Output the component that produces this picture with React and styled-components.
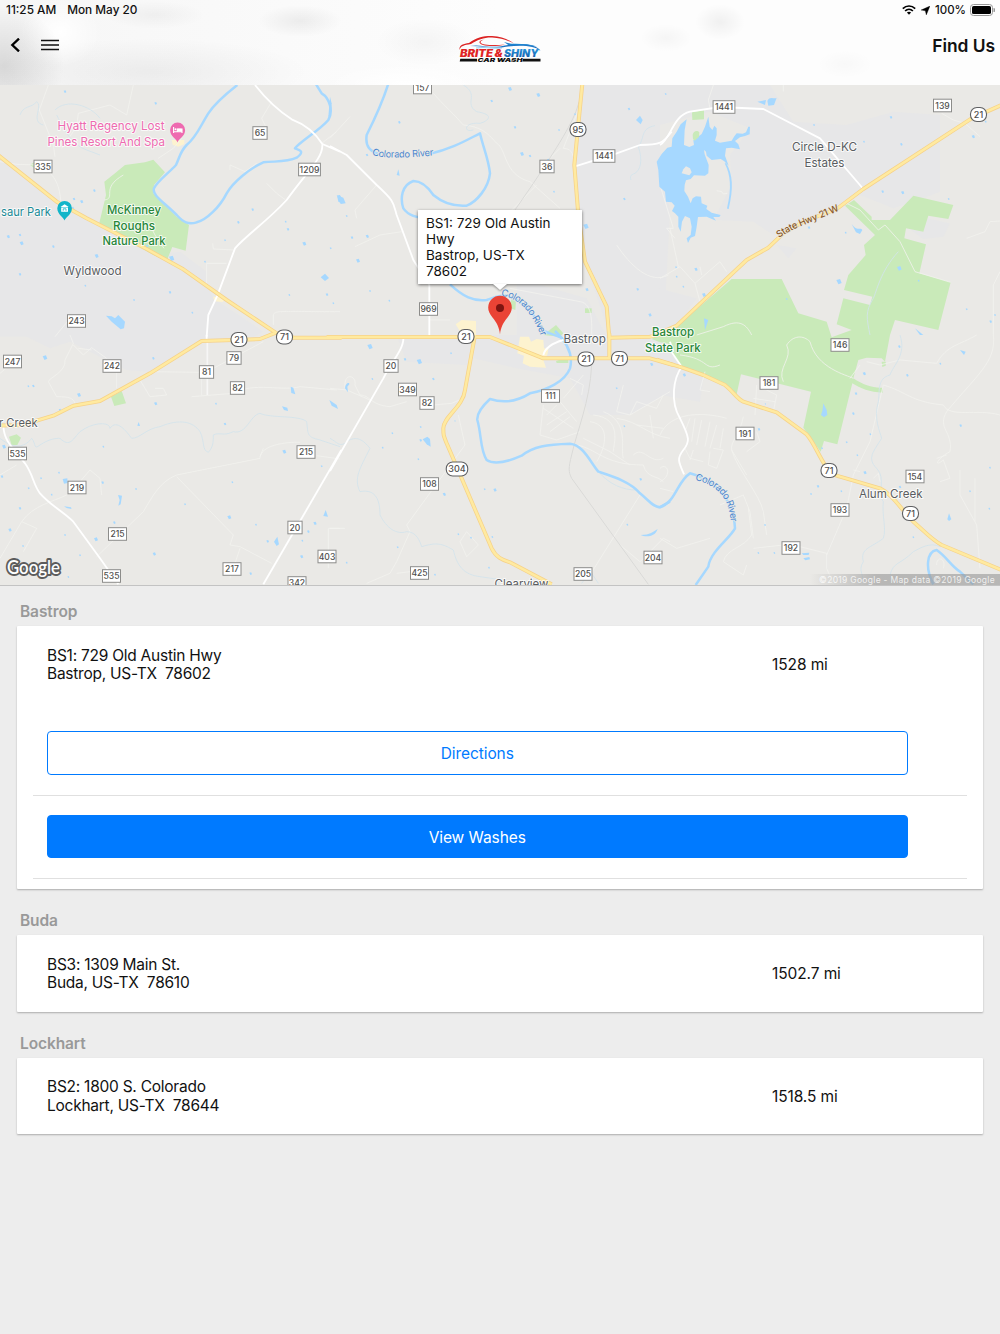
import React from 'react'
import styled, { createGlobalStyle, css } from 'styled-components'

const GlobalStyle = createGlobalStyle`
  * {
    box-sizing: border-box;
  }
  body {
    margin: 0;
    background-color: #ededed;
    font-family: Inter, 'Liberation Sans', sans-serif;
    color: #111;
  }
`

const Page = styled.div`
  width: 1000px;
  min-height: 1334px;
  background-color: #ededed;
`

/* ---------- header ---------- */

const Header = styled.header`
  height: 85px;
  padding: 0 5px 0 6px;
  background:
    radial-gradient(ellipse 60px 60px at 4px 66px, rgba(0,0,0,.12), transparent),
    radial-gradient(ellipse 40px 34px at 60px 32px, #fff, transparent),
    radial-gradient(ellipse 42px 16px at 300px 21px, rgba(0,0,0,.06), transparent),
    radial-gradient(ellipse 50px 14px at 155px 15px, rgba(0,0,0,.04), transparent),
    radial-gradient(ellipse 50px 24px at 425px 42px, rgba(0,0,0,.03), transparent),
    radial-gradient(ellipse 80px 20px at 405px 84px, #fff, transparent),
    radial-gradient(ellipse 160px 34px at 150px 72px, rgba(0,0,0,.05), transparent),
    radial-gradient(ellipse 25px 18px at 720px 22px, rgba(0,0,0,.05), transparent),
    radial-gradient(ellipse 26px 14px at 666px 38px, rgba(0,0,0,.03), transparent),
    radial-gradient(ellipse 28px 14px at 845px 64px, rgba(0,0,0,.02), transparent),
    linear-gradient(90deg, #f6f6f6, #fdfdfd 50%);
`

const StatusBar = styled.div`
  display: flex;
  justify-content: space-between;
  align-items: center;
  height: 20px;
  font-size: 11.8px;
  font-weight: 500;
`

const StatusGroup = styled.div`
  display: flex;
  align-items: center;
  gap: ${props => props.gap}px;
`

const Percent = styled.span`
  margin-right: -1px;
  font-size: 11.5px;
`

const NavBar = styled.nav`
  display: grid;
  grid-template-columns: 1fr 84px 1fr;
  align-items: center;
  height: 50px;
`

const NavLeft = styled.div`
  display: flex;
  align-items: center;
  gap: 20px;
  padding-left: 4px;
`

const NavTitle = styled.h1`
  margin: 0;
  font-size: 17.4px;
  font-weight: 600;
  letter-spacing: -0.05px;
  text-align: right;
`

const IconButton = styled.button`
  display: flex;
  padding: 0;
  border: none;
  background: none;
  cursor: pointer;
`

/* ---------- map ---------- */

const MapWrap = styled.section`
  position: relative;
  height: 501px;
  border-bottom: 1px solid #c3c3c3;
  background-color: #eae9e6;
  overflow: hidden;

  svg {
    display: block;
  }
`

const Callout = styled.div`
  position: absolute;
  top: 125px;
  left: 418px;
  width: 164px;
  height: 73.5px;
  padding: 5px 8px;
  background-color: white;
  box-shadow: 0 1px 3px rgba(0,0,0,.55);
  font-size: 13.5px;
  line-height: 16.1px;
  white-space: pre-line;

  &::after {
    content: '';
    position: absolute;
    left: 75px;
    bottom: -6px;
    border: solid transparent;
    border-width: 6px 7px 0;
    border-top-color: white;
    filter: drop-shadow(0 1px 1px rgba(0,0,0,.4));
  }
`

const Attribution = styled.div`
  position: absolute;
  right: 0;
  bottom: 0;
  width: 190px;
  height: 11px;
  padding-right: 5px;
  background: linear-gradient(90deg, rgba(150,150,150,0), rgba(150,150,150,.6) 35%);
  color: rgba(255,255,255,.8);
  font-size: 8.5px;
  line-height: 12px;
  letter-spacing: 0.3px;
  text-align: right;
  white-space: nowrap;
`

/* ---------- locations ---------- */

const Locations = styled.main`
  display: flex;
  flex-direction: column;
  padding: 0 17px;
`

const City = styled.h2`
  display: flex;
  align-items: flex-end;
  height: ${props => props.first ? 40 : 46}px;
  margin: 0;
  padding: 0 3px 4px;
  color: #999;
  font-size: 15.5px;
  font-weight: 600;
  line-height: 20px;
  letter-spacing: -0.1px;
`

const Card = styled.article`
  padding: 0 16px;
  background-color: white;
  border-radius: 1px;
  box-shadow: 0 1px 2px rgba(0,0,0,.28);
`

const Row = styled.div`
  display: grid;
  grid-template-columns: 725px 1fr;
  align-items: center;
  height: 76.5px;
  padding: 2px 0 0 14px;
  font-size: 15.5px;
  line-height: 18.5px;
  letter-spacing: -0.1px;
`

const Address = styled.div`
  white-space: pre;
  letter-spacing: -0.25px;
`

const Action = styled.div`
  padding: ${props => props.first ? '28.5px' : '19px'} 59px 20px 13.5px;
  border-bottom: 1px solid #e0e0e0;
`

const Button = styled.button`
  display: block;
  width: 100%;
  height: 43.5px;
  padding: 2px 0 0;
  border: 1px solid #007aff;
  border-radius: 4px;
  background-color: white;
  color: #007aff;
  font-family: inherit;
  font-size: 15.5px;
  letter-spacing: -0.07px;
  cursor: pointer;

  ${props => props.filled &&
    css`
      background-color: #007aff;
      color: white;
    `
  }
`

const CardEnd = styled.div`
  height: 10px;
`

/* Map artwork, split in tiles. Coordinates are in thirds of a pixel. */
const tiles = [
  {
    x: 0, y: 85,
    towns: ['M-5,220 L180,360 L300,420 L460,510 L540,500 L620,560 L620,600 L640,640 L790,740 L760,755 L-5,755Z'],
    parks: [
      'M297,418 L318,330 313,290 345,265 375,240 435,232 460,224 495,262 462,300 460,325 490,355 530,395 567,420 557,497 517,486 500,527 460,510Z',
      'M90,240 L102,232 102,248Z',
    ],
    yellow: ['M515,165 h38 v12 l-18,8 -17,-6Z', 'M640,635 l40,2 -12,14 -25,-2Z'],
    rivers: ['M712,0 C680,25 645,55 625,85 C600,125 590,155 560,180 C540,200 540,215 528,240 C505,265 470,290 462,310 C455,330 490,350 530,390 C550,412 565,420 590,412 C620,405 660,365 680,325 C700,290 750,250 790,232 C830,228 860,232 890,218 C915,200 900,195 885,190 C900,170 960,135 985,105 C1000,80 990,40 965,25 L947,-4'],
    creeks: ['M60,90 C70,60 95,70 110,50 C130,65 90,110 130,120', 'M165,75 C200,40 270,60 300,100 M170,90 C200,150 220,180 260,195 L300,210'],
    lanes: ['M145,0 L118,75 160,180 165,215 M185,190 L230,125 235,85 330,60 380,90 400,0', 'M0,230 L50,238 120,240 C170,270 180,310 182,350', 'M815,50 L785,100 800,130', 'M800,295 L830,325 857,345', 'M770,235 L735,260 690,240 690,255', 'M700,495 L640,492 638,475', 'M680,535 L620,535 620,600', 'M313,345 C350,340 300,310 370,270 370,240', 'M545,160 L520,190 475,220', 'M820,720 V690 C825,675 840,680 1020,680', 'M165,755 L210,700 M965,175 L1010,140', 'M450,420 L465,450 492,490'],
    roads: ['M765,0 C800,45 840,80 875,103 C920,120 950,150 967,177 C970,220 920,260 860,345 C800,410 740,450 705,490 L652,632 L625,690 L620,755', 'M967,177 L1020,200'],
    highways: ['M-10,207 L170,350 L260,400 L440,492 L550,553 L680,645 L830,745 L880,758'],
    ponds: [[195,20,4],[467,55,4],[25,455,5],[65,475,6],[60,450,4],[218,370,5],[245,350,5],[283,317,4],[222,342,4],[160,485,4],[290,513,6],[60,568,4],[256,602,3],[402,645,3],[510,622,4],[577,683,3],[758,374,4],[715,412,4],[857,410,3],[864,433,4],[913,476,6],[992,490,3],[981,629,4],[868,630,3],[515,520,8],[615,530,3],[441,483,4],[110,380,6],[675,466,3]],
    lakes: ['M318,692 L335,694 345,700 355,690 375,710 372,730 362,733 335,710Z', 'M962,577 L975,566 987,579 975,588Z', 'M1012,335 C1018,325 1025,330 1025,355 L1015,350Z'],
  },
  {
    x: 330, y: 85,
    towns: ['M760,0 L990,0 L990,190 L1020,380 L1000,755 L840,755 L770,540 L745,380 L733,240Z', 'M560,580 L770,640 L830,755 L560,755Z'],
    parks: ['M545,640 L558,648 556,675 538,668Z', 'M640,750 L678,720 700,745 690,755Z', 'M765,670 h20 v14 h-20Z'],
    yellow: ['M377,718 L395,705 438,708 438,755 400,755Z'],
    rivers: [
      'M175,-4 C155,60 130,110 110,150 C105,185 120,200 150,208 M295,208 C370,190 410,165 450,145 C460,190 475,220 480,265 C475,310 440,350 410,362 C370,365 340,355 310,330 C290,300 270,288 250,288 C215,300 210,340 220,370 C235,392 265,400 300,400',
      'M360,598 C400,635 430,650 470,645 C500,635 510,630 530,632 C580,645 615,690 640,738 C670,750 700,755 710,770',
    ],
    creeks: ['M400,0 C450,30 400,55 440,80 C500,90 470,110 450,115 C400,110 400,145 430,135', 'M975,122 C930,130 945,160 925,185 C940,230 930,255 915,265 C900,270 900,275 903,285', 'M450,325 L425,358'],
    lanes: ['M310,25 C340,60 370,85 400,120 C450,125 470,140 500,175 C530,190 520,270 600,290 L690,370', 'M755,50 L700,190 C730,190 730,215 735,240', 'M0,160 L60,95', 'M140,300 L75,375 80,400', 'M215,440 L150,450 75,485', 'M620,300 L540,380 M540,610 L750,650 C790,655 785,720 785,755', 'M298,705 H360', 'M1015,570 C960,600 900,540 860,480', 'M690,190 L630,250'],
    rails: ['M747,50 C735,100 700,160 610,295 L555,375'],
    roads: ['M0,183 L50,210 L140,300 C195,350 190,355 200,390 L250,525 L298,600 V755', 'M733,245 L860,205 L930,180 C1000,180 1000,170 1025,140'],
    highways: ['M757,-4 L733,240 L745,390 L765,530 L830,665 L838,760'],
    ponds: [[485,48,4],[208,112,4],[111,210,4],[555,127,4],[687,135,3],[897,72,4],[576,207,6],[600,213,4],[655,225,4],[883,342,4],[50,393,3],[112,454,5],[84,527,6],[120,618,3],[178,647,3],[10,655,3],[771,614,5],[923,613,4],[960,690,5],[66,458,4],[672,320,3],[768,424,8],[540,12,6],[625,30,6],[735,88,3]],
    lakes: ['M20,330 L40,338 47,355 32,357Z', 'M918,105 L930,92 938,105 932,118Z', 'M200,270 L205,253 209,272Z', 'M0,35 L5,55 3,90 -5,95Z'],
  },
  {
    x: 660, y: 85,
    towns: ['M0,0 L330,0 L400,110 L560,120 L700,80 L840,90 L840,320 L790,340 L700,370 L600,330 L450,400 L340,450 L280,410 L160,405 L215,300 L210,210 L270,130 L150,80 L0,120Z', 'M-5,610 L110,640 L30,745 L-5,760Z', 'M350,480 L410,490 385,520Z', 'M740,425 L800,400 870,415 850,455 790,462Z'],
    parks: [
      'M555,362 L582,345 L635,395 635,405 690,405 760,332 880,360 865,402 805,392 790,440 738,430 733,460 798,478 778,565 872,592 835,735 705,705 L690,750 L675,830 665,820 620,818 595,825 580,880 C610,900 640,910 668,908 L668,923 C630,922 600,910 577,895 L532,1078 492,1068 482,1100 430,1028 453,920 243,868 230,928 C185,895 130,865 65,845 L30,800 20,750 L215,582 365,582 415,685 500,710 515,757 L575,735 530,718 550,640 630,660 637,635 552,615 565,570 617,510 612,480 645,450Z',
      'M96,82 L132,76 132,103 97,105Z', 'M665,830 h12 v12 l-10,4Z',
    ],
    yellow: [],
    rivers: [],
    creeks: ['M715,500 C660,560 650,620 640,640 C615,680 620,700 630,750'],
    lanes: ['M0,580 L60,545 105,595 180,530 200,560 M120,545 L125,570', 'M0,300 L40,430 M30,430 L55,545 M105,595 L120,650 M40,430 L20,430 45,460', 'M560,355 L600,375 655,435 675,420 720,470 765,560 872,592', 'M920,460 L975,440 990,410 1020,408', 'M845,85 L880,105 915,115 960,155', 'M1000,750 V600 L1020,560', 'M110,750 L190,725 C240,700 260,720 275,750', 'M370,0 V20 M150,70 L145,45 160,0', 'M170,317 L185,320 190,327 202,325'],
    roads: ['M0,180 C30,165 40,90 90,80 L180,66 L310,72 L480,160 L610,312'],
    highways: ['M1025,60 L935,100 L610,312 L530,372 L430,410 L370,445 L325,488 L260,525 L50,722 L0,744'],
    ponds: [[17,27,3],[462,120,3],[612,170,3],[693,97,4],[724,178,4],[940,155,5],[668,320,4],[728,323,5],[866,342,3],[977,110,3],[557,443,3],[108,553,5],[48,547,3],[50,575,3],[70,605,3],[132,630,6],[537,590,8],[718,550,7],[776,587,3],[380,642,3],[920,673,3],[992,710,4],[1005,690,3],[447,428,4]],
    lakes: [
      // Lake Bastrop and its creek to the south east
      'M80,103 L74,135 72,180 88,186 102,180 100,166 125,147 135,125 145,95 149,125 157,135 163,122 170,130 170,150 165,167 180,173 215,167 222,155 230,145 248,146 258,142 265,125 270,125 269,148 255,153 240,157 225,168 235,178 240,193 215,188 198,190 195,212 206,242 192,228 182,222 155,225 140,212 138,200 132,195 134,208 146,240 145,265 135,272 102,271 92,282 78,286 74,300 73,318 84,335 92,355 98,340 108,334 123,335 125,355 142,362 139,372 155,383 182,390 178,396 160,396 168,407 140,395 114,396 110,425 105,453 92,458 84,474 80,460 92,450 95,425 90,400 75,393 66,410 62,440 55,425 55,395 45,385 36,378 44,362 35,352 18,350 15,320 -2,305 -5,255 -10,230 5,207 22,188 35,185 37,160 50,140 62,118Z',
      'M199,235 C219,270 221,310 206,372 C203,372 200,371 202,365 C215,310 212,270 194,235Z',
      'M292,50 L318,45 315,60Z', 'M322,48 C330,30 345,45 350,38 L342,60 325,62Z', 'M575,417 C590,440 600,425 607,435 L600,447 588,442Z', 'M132,700 L145,705 135,735Z', 'M765,730 L790,750 780,750Z',
    ],
    islands: ['M65,265 L70,253 78,244 90,250 95,262 88,271Z'],
    groves: ['M98,150 C100,137 112,135 118,142 L117,155 104,167 99,162Z'],
  },
  {
    x: 0, y: 335,
    towns: ['M70,0 L785,0 L600,18 L450,110 L380,105 L270,50 L210,20 L150,40Z'],
    parks: ['M333,185 L365,168 378,205 343,213Z', 'M27,305 L50,298 63,308 52,330 35,330Z'],
    yellow: [],
    rivers: [],
    creeks: ['M0,310 C50,350 80,330 95,310 C110,330 100,345 120,330 C150,310 170,310 180,310 C210,340 220,310 240,290 C280,260 330,260 330,280 C350,250 380,290 395,310 C420,310 440,280 480,275 C540,250 580,260 600,290 C615,320 605,345 625,352 C640,335 640,320 640,300 C660,290 670,305 700,290 C740,300 750,240 780,235 C810,250 900,240 920,260 C925,300 920,305 960,315 L1020,335'],
    lanes: ['M210,0 L220,25 195,75 M235,40 L275,45 M220,30 L250,60 275,38 320,70 M195,75 C200,110 145,130 145,140 L170,185 C210,185 220,190 225,205', 'M290,665 L430,530 C460,480 480,440 530,420 L780,370 C780,330 860,320 900,322 M780,365 L790,340 M950,362 L1020,372', 'M530,425 L700,600 690,630 720,635 815,685', 'M720,640 L690,730', 'M0,670 L65,560 110,580 70,650 M65,560 C100,510 160,500 200,480', 'M240,440 L270,405 300,430 305,480', 'M420,135 L450,185 500,180 490,160 465,160', 'M455,110 L600,112 M640,100 L790,20', 'M575,185 L700,175 C760,140 850,170 900,155 L1010,165', 'M350,110 V160 M0,115 L30,90 M0,420 L50,390 M605,130 V180', 'M985,700 V580 H1020'],
    roads: ['M10,272 C12,320 40,340 75,385 C100,420 100,450 120,475 C150,510 190,530 220,560 L300,670 L355,748', 'M1024,345 L790,748', 'M620,0 V15'],
    faint: ['M622,15 V180'],
    highways: ['M-10,272 L70,270 L110,257 L160,242 L220,212 L300,198 L450,115 L605,18 L780,12 L830,-8', 'M860,4 L880,8 H1025'],
    ponds: [[135,68,7],[100,153,4],[85,154,3],[237,180,6],[180,225,4],[467,206,5],[310,335,3],[675,267,4],[648,206,3],[853,350,6],[965,394,3],[177,413,3],[123,430,3],[86,460,3],[155,479,3],[60,520,4],[408,462,3],[308,443,4],[697,442,3],[555,508,3],[688,547,6],[768,569,3],[30,585,5],[343,563,4],[195,600,3],[288,613,6],[69,633,3],[240,661,3],[463,657,5],[752,716,4],[905,665,5],[803,619,4],[945,565,5],[925,590,4],[907,617,3],[460,70,4],[6,425,4],[12,335,6],[205,726,3]],
    lakes: ['M188,432 L202,430 203,444 192,446Z', 'M354,480 L366,482 362,508 355,512 359,495Z', 'M822,620 L832,605 837,628 830,633Z', 'M970,543 L977,525 984,545Z', 'M872,155 L880,158 886,178 874,174Z', 'M846,214 L862,218 864,228 852,225Z', 'M988,195 L1010,210 1014,222 995,212Z', 'M192,514 L213,517 215,522 200,519Z', 'M412,272 L416,261 420,273Z'],
  },
  {
    x: 330, y: 335,
    towns: ['M440,0 L1020,0 L1020,170 L900,240 L780,240 L720,130 L560,100 L430,70Z', 'M200,0 L430,0 L410,90 L230,80Z'],
    parks: ['M965,12 L1000,-12 1025,10 1025,28 990,22Z', 'M678,78 L715,66 715,84 680,84Z'],
    yellow: ['M565,35 L570,5 597,5 603,20 620,12 640,15 642,40 655,42 652,60 640,75 648,98 600,95 578,85 582,62 562,55Z'],
    rivers: ['M675,-12 C715,25 730,60 720,100 C705,140 650,165 600,175 C560,200 520,205 480,192 C455,215 440,235 442,255 C455,300 450,345 470,375 C490,388 530,382 575,362 C610,335 650,328 720,326 C760,330 780,380 805,410 C850,425 900,440 930,475 C960,500 975,520 990,516 L1020,500'],
    creeks: ['M0,310 C20,320 30,340 50,320 C80,300 100,315 120,340 C90,400 70,430 90,470 C140,460 150,500 150,540 C170,580 200,600 230,590 C260,590 270,620 275,635 C310,625 330,620 370,645 C380,690 400,720 450,725 L520,735', 'M805,410 C840,450 880,465 920,465', 'M785,715 L805,745 M770,725 L755,745'],
    lanes: ['M45,160 C40,110 80,120 75,150 L90,180 C120,180 120,210 180,215 L230,200 M310,210 L365,205 400,190', 'M0,160 L50,165 120,195', 'M385,240 L405,330 230,570 240,590 200,680 180,715 110,745 M200,715 L240,710', 'M390,620 L410,590 445,630 410,665 390,620', 'M640,210 L630,300 680,315 750,290 M650,240 L680,210 M650,270 L710,230 M640,220 L730,280 M660,290 L720,245 M690,200 L740,260', 'M880,150 L860,230 900,240 1020,170 M780,260 C850,270 820,350 800,380 M790,240 C880,250 850,330 850,350 M820,230 C900,260 870,340 880,370 M860,250 C930,260 950,300 1020,310 M900,240 L920,200 980,220 1000,180 M760,310 L840,350 900,390 M740,330 C800,340 820,390 940,390', 'M910,360 C940,330 960,390 1000,370 M940,390 C950,430 980,420 1000,440 M960,240 L970,310 M920,270 L1000,280', 'M780,720 L930,480 M870,630 L930,680 1000,610 1020,620', 'M0,580 H45', 'M720,130 L760,150 755,180 M760,120 L700,190'],
    rails: ['M785,90 C780,200 740,290 725,360 C715,400 715,410 725,430 L955,748'],
    roads: ['M220,0 C225,40 190,70 160,130 L0,408', 'M640,60 C645,40 665,25 700,15'],
    highways: ['M-10,6 H480 L640,70 H960 L1030,90', 'M838,-5 V70', 'M838,8 L960,5 L1020,-8', 'M435,0 L405,165 C400,215 340,245 340,280 C340,300 340,300 350,325 L485,640 C500,670 520,675 540,682 L665,748'],
    ponds: [[225,73,4],[268,80,8],[127,132,3],[310,132,4],[272,276,3],[187,295,3],[272,316,4],[158,338,3],[265,373,3],[343,478,5],[464,463,3],[495,465,5],[385,598,3],[423,608,3],[487,606,3],[203,637,3],[50,683,3],[315,719,3],[860,160,3],[883,274,3],[892,569,3],[477,698,3],[375,258,2],[120,35,8],[932,433,4],[965,88,5],[363,55,3]],
    lakes: ['M278,313 L292,305 300,312 302,335 290,328Z', 'M45,160 C47,140 60,142 58,148 L52,155 54,172Z', 'M932,600 C960,600 970,590 983,582 C975,605 955,605 940,603Z'],
  },
  {
    x: 660, y: 335,
    towns: ['M0,10 L20,20 L70,95 L130,130 L120,200 L0,180Z'],
    parks: [],
    yellow: [],
    rivers: ['M-2,518 C50,500 50,440 90,415 C150,430 220,480 225,580 C210,610 150,650 145,695 L107,750', 'M820,748 C795,700 800,650 830,645 C860,665 870,690 900,710 L940,748'],
    creeks: ['M720,0 C740,60 700,90 690,120 C650,130 660,170 655,200 C640,250 660,290 665,310 C640,350 620,370 650,400 C680,430 650,480 670,500 C665,540 680,580 670,610 C630,640 600,640 610,680 C590,710 620,720 600,748', 'M840,635 C810,620 780,640 760,650 C720,690 700,680 690,720'],
    lanes: ['M0,300 C30,230 130,230 200,250 240,245 L255,200', 'M135,110 L120,165 150,170 M90,250 L75,290 M105,250 L95,320 M125,255 L110,330 M150,260 L135,335 M170,270 L150,340 M190,280 L180,340 M75,340 L90,370 130,380 M100,345 L90,375', 'M250,245 C240,300 210,320 215,345 C230,400 300,480 310,530 L320,600 M215,345 L260,420', 'M160,340 L190,345 170,400 145,390 150,350', 'M180,510 L250,480 270,530 280,610 M265,520 L275,600 C250,640 200,640 190,680 L250,720 260,690', 'M0,610 L50,640 150,610 M280,640 L370,630 M420,635 L500,655 500,700 M500,660 L560,520 580,420 630,320 670,150 M500,700 L520,748', 'M260,350 L300,320 290,290', 'M290,150 L285,240 M280,190 L345,200 M310,160 L350,180 340,230', 'M370,140 C350,100 400,70 380,30 C400,0 430,0 450,20 C470,100 560,120 580,130', 'M180,90 C130,110 150,70 60,60', 'M620,80 L660,90 720,75 830,85 C860,30 900,30 950,0 M1000,0 C1010,80 950,120 860,230 M670,150 C740,170 750,200 850,210 C870,250 950,220 1020,240 M860,230 C830,280 880,290 870,350 C830,370 820,400 850,375 M850,375 L870,430 840,440 M830,370 L860,360', 'M570,130 L600,90', 'M900,405 V480 L950,570 960,700 M945,430 V560', 'M0,400 C20,380 40,420 0,440 M0,460 L40,470 M830,690 C830,660 860,670 850,700 830,710 830,690', 'M580,405 L600,410 M640,430 L655,415 660,440'],
    roads: ['M20,30 L65,95 C40,130 30,200 60,250 C90,310 90,320 70,345 C50,370 55,380 72,418', 'M30,20 L40,50'],
    highways: ['M-10,74 L65,97 L130,120 L195,150 C225,175 230,190 250,200 L350,232 L440,298 C460,320 475,360 495,390 C500,415 520,418 540,425 L660,460 C700,480 720,520 760,560 C790,585 810,610 845,630 L1025,705'],
    ponds: [[73,120,5],[316,207,2],[297,283,4],[580,236,4],[588,176,4],[631,298,3],[560,322,3],[592,361,3],[615,413,5],[474,454,4],[453,477,3],[544,469,3],[315,570,3],[343,654,3],[295,654,3],[760,607,3],[930,469,3],[902,272,4],[742,121,4],[841,86,3],[613,116,5],[990,398,3],[988,521,3],[720,456,4],[718,35,4],[486,340,3]],
    lakes: ['M483,240 L487,228 490,205 500,225 502,240 492,247Z', 'M900,45 L917,50 912,60Z', 'M862,553 L867,535 874,553 867,558Z', 'M425,655 L448,653 446,660 430,660Z', 'M430,670 L448,666 450,673 436,676Z'],
  },
]

// [label, x, y] centre of the sign
const roadSigns = [
  ['335', 43, 166.5], ['65', 260, 133], ['1209', 309.5, 169.5], ['243', 76.5, 321],
  ['157', 422.5, 87.5], ['36', 547, 166.5], ['1441', 604, 156], ['969', 428.5, 309],
  ['1441', 724, 107], ['139', 942.5, 105.5], ['247', 12.5, 361.5], ['242', 112, 366],
  ['79', 234, 358], ['81', 206.5, 372], ['82', 237.5, 388], ['20', 391, 366],
  ['349', 407.5, 389.5], ['82', 427, 403], ['535', 17.5, 453.5], ['219', 77, 487.5],
  ['215', 117.5, 534], ['215', 306, 452], ['20', 295, 527.5], ['403', 327, 556.5],
  ['217', 232, 569], ['535', 111.5, 576], ['342', 297, 583], ['425', 419.5, 573],
  ['108', 429.5, 484], ['111', 550.5, 396], ['204', 653, 557.5], ['205', 583, 574],
  ['146', 840, 345], ['181', 769, 383], ['191', 745, 433.5], ['154', 915, 476.5],
  ['193', 840, 510], ['192', 791, 548],
]

const highwaySigns = [
  ['71', 284.5, 337], ['21', 239, 339.5], ['95', 578, 129.5], ['21', 978.5, 114.5],
  ['21', 466, 336.5], ['21', 586, 359], ['71', 619.5, 358.5], ['304', 457, 469],
  ['71', 829, 470.5], ['71', 910.5, 513.5],
]

// [text, x, y, width, kind]
const mapLabels = [
  ['Hyatt Regency Lost', 57.5, 130, 107, 'hotel'],
  ['Pines Resort And Spa', 47.5, 145.5, 117.5, 'hotel'],
  ['saur Park', 1, 216, 50, 'museum'],
  ['McKinney', 107, 214.4, 54, 'park'],
  ['Roughs', 113, 229.6, 42, 'park'],
  ['Nature Park', 102.5, 244.6, 63, 'park'],
  ['Wyldwood', 63.5, 274.5, 58, 'town'],
  ['Circle D-KC', 792, 151.4, 65, 'town'],
  ['Estates', 804.5, 167, 40, 'town'],
  ['Bastrop', 563.5, 343, 42.5, 'town'],
  ['Bastrop', 652, 336.4, 42, 'park'],
  ['State Park', 645, 352, 55.5, 'park'],
  ['r Creek', -1, 426.5, 38.5, 'town'],
  ['Alum Creek', 859, 498, 63.5, 'town'],
  ['Clearview', 494.5, 587.5, 54, 'town'],
]

const labelColors = { hotel: '#ee6ab0', museum: '#1a8a96', park: '#27863a', town: '#5a5d61' }

const MapText = styled.text`
  font-size: 12px;
  font-weight: ${props => props.$weight || 400};
  fill: ${props => props.$color};
  stroke: rgba(255,255,255,.8);
  stroke-width: 2px;
  stroke-linejoin: round;
  paint-order: stroke;
`

const SignText = styled.text`
  font-size: ${props => props.$size || 8.6}px;
  font-weight: 500;
  fill: #50504e;
  text-anchor: middle;
`

const CurvedText = styled(MapText)`
  font-size: 9.5px;
  stroke: rgba(234,233,230,.7);
`

// one kind of feature, drawn over every tile
const Layer = ({ name, ...rest }) => (
  <g fill='none' strokeLinejoin='round' {...rest}>
    {tiles.map(tile => (
      <g key={`${tile.x}-${tile.y}`} transform={`translate(${tile.x} ${tile.y}) scale(.33333)`}>
        {(tile[name] || []).map((d, i) => <path key={i} d={d} />)}
      </g>
    ))}
  </g>
)

const Ponds = () => (
  <g fill='#a6d8ff'>
    {tiles.map(tile => (
      <g key={`${tile.x}-${tile.y}`} transform={`translate(${tile.x} ${tile.y}) scale(.33333)`}>
        {tile.ponds.map(([x, y, r], i) => (
          <path key={i} d={`M${x - r},${y - r * .6} L${x + r * .4},${y - r} L${x + r},${y + r * .5} L${x - r * .2},${y + r}Z`} />
        ))}
      </g>
    ))}
  </g>
)

const MapArt = () => (
  <svg width='1000' height='500' viewBox='0 85 1000 500'>
    <Layer name='towns' fill='#e7e7e8' />
    <Layer name='parks' fill='#c9eab9' />
    <Layer name='yellow' fill='#fdf3cf' />
    <Layer name='lanes' stroke='#f3f2ef' strokeWidth='2.4' />
    <Layer name='faint' stroke='#f6f6f5' strokeWidth='5' />
    <Layer name='creeks' stroke='#d3e3ec' strokeWidth='2.5' />
    <Layer name='rails' stroke='#dadad8' strokeWidth='3' />
    <Layer name='lakes' fill='#a6d8ff' />
    <Layer name='islands' fill='#eae9e6' />
    <Layer name='groves' fill='#c9eab9' />
    <Ponds />
    <Layer name='rivers' stroke='#a6d8ff' strokeWidth='7.5' />
    <Layer name='roads' stroke='#fff' strokeWidth='5.5' />
    <Layer name='highways' stroke='#f6d28a' strokeWidth='12' />
    <Layer name='highways' stroke='#ffeaa0' strokeWidth='7.5' />

    {roadSigns.map(([label, x, y], i) => {
      const w = 6.6 + label.length * 3.8
      return (
        <g key={i}>
          <rect x={x - w / 2} y={y - 6.3} width={w} height='12.6' fill='#fff' stroke='#8c8c8a' strokeWidth='1' />
          <SignText x={x} y={y + 3.2}>{label}</SignText>
        </g>
      )
    })}
    {highwaySigns.map(([label, x, y], i) => {
      const w = label.length === 3 ? 21.5 : 16
      return (
        <g key={i}>
          <rect x={x - w / 2} y={y - 7} width={w} height='14' rx='6.5' fill='#fff' stroke='#5f6062' strokeWidth='1.1' />
          <SignText $size={9} x={x} y={y + 3.2}>{label}</SignText>
        </g>
      )
    })}

    {mapLabels.map(([text, x, y, width, kind]) => (
      <MapText
        key={`${text}${y}`}
        x={x}
        y={y}
        textLength={width}
        lengthAdjust='spacingAndGlyphs'
        $color={labelColors[kind]}
        $weight={kind === 'park' ? 450 : 400}
      >
        {text}
      </MapText>
    ))}

    <path id='river-west' d='M372,154.5 C382,159 405,158 440,155' fill='none' />
    <path id='river-mid' d='M501,296 C522,298 534,317 542,339' fill='none' />
    <path id='river-east' d='M695,480 C718,485 730,499 731,525' fill='none' />
    <path id='highway-21' d='M779,238 C795,226 815,222 842,209' fill='none' />
    <CurvedText $color='#4a86cf'><textPath href='#river-west' textLength='62'>Colorado River</textPath></CurvedText>
    <CurvedText $color='#4a86cf'><textPath href='#river-mid' textLength='60'>Colorado River</textPath></CurvedText>
    <CurvedText $color='#4a86cf'><textPath href='#river-east' textLength='60'>Colorado River</textPath></CurvedText>
    <CurvedText $color='#8a5a2b' $weight='500'><textPath href='#highway-21' textLength='67'>State Hwy 21 W</textPath></CurvedText>

    {/* hotel */}
    <path d='M177.500,142.500 C176.500,138.500 170.100,136.500 170.100,130 A7.500,7.500 0 0 1 185.100,130 C185.100,136.500 178.700,138.500 177.500,142.500Z' fill='#ee6ab0' />
    <path d='M173.600,127 V133 M173.600,131.800 H182 V133 M182,131.800 V129 H177.300 V131.500' fill='none' stroke='#fff' strokeWidth='1.100' />
    <circle cx='175.500' cy='129.300' r='1' fill='#fff' />
    <path d='M177.300,128.700 H181 A1,1 0 0 1 182,129.800 V131.500 H177.300Z' fill='#fff' />
    {/* museum */}
    <path d='M64.500,220.500 C63.500,217 57.300,214.500 57.300,208.200 A7.300,7.300 0 0 1 71.900,208.200 C71.900,214.500 65.700,217 64.500,220.500Z' fill='#12b5c9' />
    <path d='M60.500,207 L64.600,204.300 L68.700,207Z M61.200,207.600 H68 V211.800 H61.200Z' fill='#fff' />
    <path d='M63.200,210.800 V208.800 H66 V210.800' fill='none' stroke='#12b5c9' strokeWidth='.8' />
    {/* selected wash */}
    <path d='M500,334.500 C499.300,327 496.500,322.500 492.500,317.500 C489.500,313.500 488.200,311 488.200,307.500 A11.800,11.800 0 0 1 511.800,307.500 C511.800,311 510.500,313.500 507.500,317.500 C503.500,322.500 500.700,327 500,334.500Z' fill='#ea4335' />
    <circle cx='500' cy='308' r='4' fill='#7d1410' />

    <text
      x='7' y='574' textLength='53' lengthAdjust='spacingAndGlyphs'
      fontFamily='Lato, sans-serif' fontSize='18.500' fontWeight='600'
      fill='#fff' stroke='#5c5c5c' strokeWidth='4' strokeLinejoin='round' paintOrder='stroke'
    >
      Google
    </text>
  </svg>
)

const LogoSvg = styled.svg`
  margin-top: 8px;
  overflow: visible;
`

const Logo = () => (
  <LogoSvg width='84' height='28' viewBox='459 35 84 28' fontFamily='Inter, sans-serif' fontStyle='italic' fontWeight='900'>
    <defs>
      <linearGradient id='blue' x1='0' y1='0' x2='0' y2='1'>
        <stop offset='0' stopColor='#2a9be0' />
        <stop offset='1' stopColor='#1556a5' />
      </linearGradient>
    </defs>
    <path d='M459.500,50 C459,45 463,43.800 469,43 C476,37.500 484,35.800 492,36 C501,36.500 508,39 514,43.500 C507,40 500,37.800 492,37.500 C484,37.300 478,39.500 471,44 C464,45 460.500,46 459.500,50Z' fill='#dc2323' />
    <path d='M486,39.500 C480,40 478,43 485,44.500 C492,45.500 498,45 505,44.500 C498,46.500 488,46.500 483,45 C477,43 479,39.500 486,39.500Z' fill='#e03030' />
    <path d='M470,46 C480,44 487,48 500,46.500 C514,43 537,43 540.500,51 C535,45 518,45 506,46.800 C495,49 484,46 470,46Z' fill='#1e74c4' />
    <path d='M504,42 L511,43.800 C520,43.500 530,44 537,46.500 C528,45 518,45 509,45.500Z' fill='#1e84d0' />
    <path d='M476,48 C486,46.500 492,49 502,48' fill='none' stroke='#6ab7ea' strokeWidth='.7' />
    <text x='460' y='57' fontSize='9.800' textLength='33' lengthAdjust='spacingAndGlyphs' fill='#e02424'>BRITE</text>
    <text x='494.500' y='57' fontSize='9.800' textLength='8' lengthAdjust='spacingAndGlyphs' fill='#e02424'>&amp;</text>
    <text x='504' y='57' fontSize='9.800' textLength='34.500' lengthAdjust='spacingAndGlyphs' fill='url(#blue)'>SHINY</text>
    <path d='M460.300,58.800 H477 V61.600 H459.700Z M523,58.800 H540.500 V61.600 H522.300Z' fill='#111' />
    <text x='477.500' y='62' fontSize='5.200' textLength='45' lengthAdjust='spacingAndGlyphs' fill='#111'>CAR WASH</text>
  </LogoSvg>
)

const locations = [
  { city: 'Bastrop', address: 'BS1: 729 Old Austin Hwy\nBastrop, US-TX  78602', distance: '1528 mi', open: true },
  { city: 'Buda', address: 'BS3: 1309 Main St.\nBuda, US-TX  78610', distance: '1502.7 mi' },
  { city: 'Lockhart', address: 'BS2: 1800 S. Colorado\nLockhart, US-TX  78644', distance: '1518.5 mi' },
]

const App = () => {
  return (
    <Page>
      <GlobalStyle />
      <Header>
        <StatusBar>
          <StatusGroup gap={11}>
            <span>11:25 AM</span>
            <span>Mon May 20</span>
          </StatusGroup>
          <StatusGroup gap={5}>
            <svg width='14' height='10' viewBox='0 0 14 10' fill='none' stroke='#000' strokeWidth='1.7'>
              <path d='M.8,3.600 C4.400,.1 9.600,.1 13.200,3.600 M3.100,6 C5.300,3.900 8.700,3.900 10.900,6' />
              <path d='M7,9.700 L4.900,7.600 C6,6.500 8,6.500 9.100,7.600Z' fill='#000' stroke='none' />
            </svg>
            <svg width='9' height='9' viewBox='0 0 9 9'>
              <path d='M9,0 L5.300,9 L4.300,4.800 L0,4.100Z' stroke='#000' strokeWidth='.3' />
            </svg>
            <Percent>100%</Percent>
            <svg width='25' height='12' viewBox='0 0 25 12'>
              <rect x='.5' y='.5' width='22' height='11' rx='3' fill='none' stroke='#999' />
              <rect x='2' y='2' width='19' height='8' rx='1.600' />
              <path d='M23.500,4 A2,2 0 0 1 23.500,8Z' fill='#999' />
            </svg>
          </StatusGroup>
        </StatusBar>
        <NavBar>
          <NavLeft>
            <IconButton aria-label='Back'>
              <svg width='11' height='14' viewBox='0 0 11 14' fill='none' stroke='#000' strokeWidth='2.300'>
                <path d='M9,.6 L2.300,7 L9,13.400' />
              </svg>
            </IconButton>
            <IconButton aria-label='Menu'>
              <svg width='18' height='12' viewBox='0 0 18 12' stroke='#111' strokeWidth='1.500'>
                <path d='M0,1.500 H18 M0,6 H18 M0,10.600 H18' />
              </svg>
            </IconButton>
          </NavLeft>
          <Logo />
          <NavTitle>Find Us</NavTitle>
        </NavBar>
      </Header>

      <MapWrap>
        <MapArt />
        <Callout>{'BS1: 729 Old Austin\nHwy\nBastrop, US-TX\n78602'}</Callout>
        <Attribution>©2019 Google - Map data ©2019 Google</Attribution>
      </MapWrap>

      <Locations>
        {locations.map((item, i) => (
          <section key={item.city}>
            <City first={i === 0 ? 1 : undefined}>{item.city}</City>
            <Card>
              <Row>
                <Address>{item.address}</Address>
                <span>{item.distance}</span>
              </Row>
              {item.open && (
                <>
                  <Action first={1}>
                    <Button>Directions</Button>
                  </Action>
                  <Action>
                    <Button filled={1}>View Washes</Button>
                  </Action>
                  <CardEnd />
                </>
              )}
            </Card>
          </section>
        ))}
      </Locations>
    </Page>
  )
}

export default App
